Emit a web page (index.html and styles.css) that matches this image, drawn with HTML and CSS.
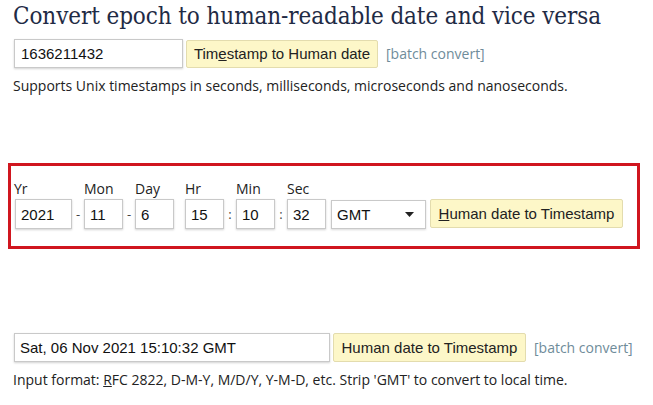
FILE: index.html
```html
<!DOCTYPE html>
<html>
<head>
<meta charset="utf-8">
<link rel="stylesheet" href="styles.css">
</head>
<body>
<h1 class="title">Convert epoch to human-readable date and vice versa</h1>
<div class="row row-top">
  <input class="field ts" type="text" value="1636211432">
  <button class="btn btn-ts">Tim<u>e</u>stamp to Human date</button>
  <a class="batch" href="#">[batch convert]</a>
</div>
<p class="note note-top">Supports Unix timestamps in seconds, milliseconds, microseconds and nanoseconds.</p>

<div class="datebox">
  <div class="group">
    <label class="lbl">Yr</label>
    <input class="field num yr" type="text" value="2021">
  </div>
  <span class="sep">-</span>
  <div class="group">
    <label class="lbl">Mon</label>
    <input class="field num" type="text" value="11">
  </div>
  <span class="sep">-</span>
  <div class="group">
    <label class="lbl">Day</label>
    <input class="field num" type="text" value="6">
  </div>
  <span class="sep sep-blank"></span>
  <div class="group">
    <label class="lbl">Hr</label>
    <input class="field num" type="text" value="15">
  </div>
  <span class="sep">:</span>
  <div class="group">
    <label class="lbl">Min</label>
    <input class="field num" type="text" value="10">
  </div>
  <span class="sep">:</span>
  <div class="group">
    <label class="lbl">Sec</label>
    <input class="field num" type="text" value="32">
  </div>
  <div class="select">
    <span>GMT</span>
    <svg class="caret" width="9" height="5" viewBox="0 0 9 5"><path d="M0 0H9L4.5 5Z" fill="#222"/></svg>
  </div>
  <button class="btn btn-h2t"><u>H</u>uman date to Timestamp</button>
</div>

<div class="row row-bottom">
  <input class="field hd" type="text" value="Sat, 06 Nov 2021 15:10:32 GMT">
  <button class="btn btn-h2t2">Human date to Timestamp</button>
  <a class="batch" href="#">[batch convert]</a>
</div>
<p class="note note-bottom">Input format: <u>R</u>FC 2822, D-M-Y, M/D/Y, Y-M-D, etc. Strip 'GMT' to convert to local time.</p>
</body>
</html>
```

FILE: styles.css
```css
html, body {
  margin: 0;
  padding: 0;
  background: #ffffff;
}
body {
  width: 653px;
  height: 405px;
  overflow: hidden;
  font-family: "Open Sans", "Liberation Sans", sans-serif;
  color: #222;
}
.title {
  margin: 0;
  padding: 0 0 0 13px;
  height: 36px;
  line-height: 33px;
  font-family: "DejaVu Serif Condensed", "DejaVu Serif", serif;
  font-stretch: condensed;
  font-weight: normal;
  font-size: 24px;
  letter-spacing: -0.1px;
  color: #1f2b45;
  white-space: nowrap;
}
.row {
  display: flex;
  align-items: center;
  padding-left: 14px;
}
.row-top {
  margin-top: 3px;
}
.field {
  box-sizing: border-box;
  height: 29px;
  border: 1px solid #c9c9c9;
  box-shadow: 0 1px 2px rgba(0,0,0,0.18);
  background: #fff;
  font-family: "Liberation Sans", Arial, sans-serif;
  font-size: 15px;
  color: #111;
  padding: 0 0 0 6px;
  margin: 0;
  outline: none;
}
.ts {
  width: 169px;
}
.btn {
  box-sizing: border-box;
  height: 28px;
  border: 1px solid #e3dcae;
  border-radius: 2px;
  background: #fdf7c8;
  font-family: "Liberation Sans", Arial, sans-serif;
  font-size: 15px;
  color: #222;
  padding: 0 6px;
  margin: 0;
  white-space: nowrap;
}
.btn-ts {
  margin-left: 3px;
  width: 192px;
}
.batch {
  margin-left: 8px;
  font-family: "Open Sans", sans-serif;
  font-size: 14px;
  color: #6f8c9a;
  text-decoration: none;
}
.note {
  margin: 0;
  font-size: 14px;
  padding-left: 13px;
  white-space: nowrap;
}
.note-top {
  margin-top: 7px;
  line-height: 22px;
}
.datebox {
  box-sizing: border-box;
  margin: 66px 0 0 8px;
  width: 632px;
  height: 86px;
  border: 3px solid #d0161f;
  display: flex;
  align-items: flex-end;
  padding: 0 0 17px 4px;
}
.group {
  display: flex;
  flex-direction: column;
}
.lbl {
  font-size: 14px;
  line-height: 20px;
  margin-bottom: 0;
}
.num {
  width: 39px;
  height: 30px;
  padding-left: 5px;
}
.yr {
  width: 57px;
}
.group:first-child .lbl {
  margin-left: -1px;
}
.sep {
  width: 12px;
  text-align: center;
  font-size: 13px;
  line-height: 30px;
  color: #444;
}
.sep-blank {
  width: 11px;
}
.select {
  box-sizing: border-box;
  margin-left: 5px;
  width: 95px;
  height: 29px;
  border: 1px solid #c9c9c9;
  box-shadow: 0 1px 2px rgba(0,0,0,0.15);
  display: flex;
  align-items: center;
  justify-content: space-between;
  padding: 0 11px 0 5px;
  font-family: "Liberation Sans", Arial, sans-serif;
  font-size: 15px;
  color: #111;
}
.btn-h2t {
  margin-left: 4px;
  width: 193px;
  height: 29px;
  margin-bottom: 1px;
}
.row-bottom {
  margin-top: 84px;
}
.hd {
  width: 316px;
  padding-left: 5px;
}
.btn-h2t2 {
  margin-left: 3px;
  width: 193px;
  height: 29px;
}
.note-bottom {
  margin-top: 8px;
  line-height: 20px;
}
```
